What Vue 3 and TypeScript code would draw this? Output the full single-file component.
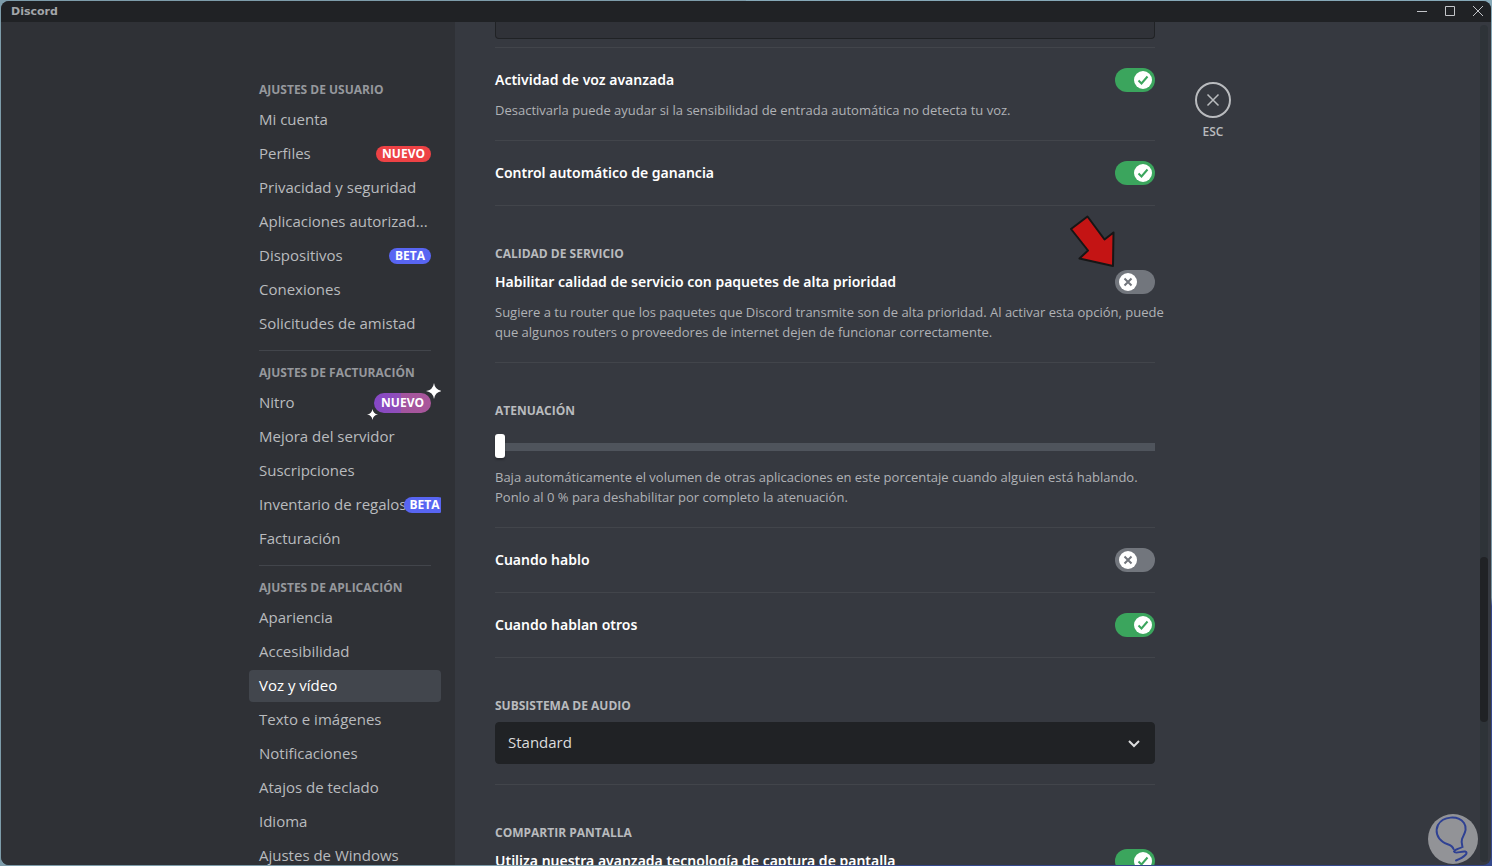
<script setup lang="ts">
import { reactive, ref } from 'vue'

interface NavItem {
  label: string
  badge?: string
  kind?: 'red' | 'blue' | 'nitro'
  active?: boolean
}
interface NavGroup {
  title: string
  items: NavItem[]
}

const groups: NavGroup[] = [
  {
    title: 'AJUSTES DE USUARIO',
    items: [
      { label: 'Mi cuenta' },
      { label: 'Perfiles', badge: 'NUEVO', kind: 'red' },
      { label: 'Privacidad y seguridad' },
      { label: 'Aplicaciones autorizad...' },
      { label: 'Dispositivos', badge: 'BETA', kind: 'blue' },
      { label: 'Conexiones' },
      { label: 'Solicitudes de amistad' },
    ],
  },
  {
    title: 'AJUSTES DE FACTURACIÓN',
    items: [
      { label: 'Nitro', badge: 'NUEVO', kind: 'nitro' },
      { label: 'Mejora del servidor' },
      { label: 'Suscripciones' },
      { label: 'Inventario de regalos', badge: 'BETA', kind: 'blue' },
      { label: 'Facturación' },
    ],
  },
  {
    title: 'AJUSTES DE APLICACIÓN',
    items: [
      { label: 'Apariencia' },
      { label: 'Accesibilidad' },
      { label: 'Voz y vídeo', active: true },
      { label: 'Texto e imágenes' },
      { label: 'Notificaciones' },
      { label: 'Atajos de teclado' },
      { label: 'Idioma' },
      { label: 'Ajustes de Windows' },
    ],
  },
]

interface Setting {
  id: string
  label: string
  on: boolean
  note?: string[]
  section?: string
  pointer?: boolean
}

const inputSettings = reactive<Setting[]>([
  {
    id: 'voice-activity',
    label: 'Actividad de voz avanzada',
    on: true,
    note: ['Desactivarla puede ayudar si la sensibilidad de entrada automática no detecta tu voz.'],
  },
  { id: 'gain', label: 'Control automático de ganancia', on: true },
  {
    id: 'qos',
    section: 'CALIDAD DE SERVICIO',
    label: 'Habilitar calidad de servicio con paquetes de alta prioridad',
    on: false,
    pointer: true,
    note: [
      'Sugiere a tu router que los paquetes que Discord transmite son de alta prioridad. Al activar esta opción, puede',
      'que algunos routers o proveedores de internet dejen de funcionar correctamente.',
    ],
  },
])

const duckSettings = reactive<Setting[]>([
  { id: 'duck-self', label: 'Cuando hablo', on: false },
  { id: 'duck-others', label: 'Cuando hablan otros', on: true },
])

const captureSettings = reactive<Setting[]>([
  {
    id: 'capture',
    section: 'COMPARTIR PANTALLA',
    label: 'Utiliza nuestra avanzada tecnología de captura de pantalla',
    on: true,
  },
])

const attenuation = ref(0)
const subsystem = ref('Standard')
</script>

<template>
  <div class="desktop">
    <div class="window">
      <header class="titlebar">
        <span class="brand">Discord</span>
        <div class="controls">
          <button type="button" aria-label="Minimizar">
            <svg width="28" height="21" viewBox="0 0 28 21"><path d="M10 10.5h10" /></svg>
          </button>
          <button type="button" aria-label="Maximizar">
            <svg width="28" height="21" viewBox="0 0 28 21"><path d="M10.5 5.500h9v9h-9z" /></svg>
          </button>
          <button type="button" aria-label="Cerrar ventana">
            <svg width="28" height="21" viewBox="0 0 28 21"><path d="M10 5l10 10M20 5l-10 10" /></svg>
          </button>
        </div>
      </header>

      <div class="body">
        <div class="side">
          <nav class="nav" aria-label="Ajustes">
            <section v-for="g in groups" :key="g.title" class="group">
              <h2 class="group-title">{{ g.title }}</h2>
              <a
                v-for="item in g.items"
                :key="item.label"
                href="#"
                class="item"
                :class="{ active: item.active }"
              >
                <span class="item-label">{{ item.label }}</span>
                <span v-if="item.badge" class="badge" :class="item.kind">
                  {{ item.badge }}
                  <template v-if="item.kind === 'nitro'">
                    <svg class="spark big" viewBox="0 0 16 16" aria-hidden="true">
                      <path d="M8 0Q9 7 16 8Q9 9 8 16Q7 9 0 8Q7 7 8 0Z" />
                    </svg>
                    <svg class="spark small" viewBox="0 0 16 16" aria-hidden="true">
                      <path d="M8 0Q9 7 16 8Q9 9 8 16Q7 9 0 8Q7 7 8 0Z" />
                    </svg>
                  </template>
                </span>
              </a>
            </section>
          </nav>
        </div>

        <div class="content">
          <main class="column">
            <div class="field-end"></div>

            <template
              v-for="(list, li) in [inputSettings, duckSettings, captureSettings]"
              :key="li"
            >
              <section v-if="li === 1" class="block sectioned">
                <label class="label" for="attenuation">ATENUACIÓN</label>
                <input
                  id="attenuation"
                  v-model.number="attenuation"
                  class="slider"
                  type="range"
                  min="0"
                  max="100"
                />
                <p class="note">
                  Baja automáticamente el volumen de otras aplicaciones en este porcentaje cuando alguien está hablando.<br />
                  Ponlo al 0 % para deshabilitar por completo la atenuación.
                </p>
              </section>
              <section v-if="li === 2" class="block sectioned">
                <label class="label" for="subsystem">SUBSISTEMA DE AUDIO</label>
                <div class="select-wrap">
                  <select id="subsystem" v-model="subsystem" class="select">
                    <option>Standard</option>
                    <option>Legacy</option>
                  </select>
                  <svg class="chevron" width="24" height="24" viewBox="0 0 24 24" aria-hidden="true">
                    <path d="M7 10l5 5 5-5" />
                  </svg>
                </div>
              </section>

              <section
                v-for="s in list"
                :key="s.id"
                class="block"
                :class="{ sectioned: s.section }"
              >
                <h3 v-if="s.section" class="label">{{ s.section }}</h3>
                <div class="row">
                  <label class="title" :for="s.id">{{ s.label }}</label>
                  <div class="toggle">
                    <input :id="s.id" v-model="s.on" type="checkbox" role="switch" />
                    <svg v-if="s.on" class="knob on" width="18" height="18" viewBox="0 0 18 18" aria-hidden="true">
                      <circle cx="9" cy="9" r="9" />
                      <path d="M4.500 9.500l3 3 6-7" />
                    </svg>
                    <svg v-else class="knob" width="18" height="18" viewBox="0 0 18 18" aria-hidden="true">
                      <circle cx="9" cy="9" r="9" />
                      <path d="M5.500 5.500l7 7M12.500 5.500l-7 7" />
                    </svg>
                    <svg v-if="s.pointer" class="pointer" width="50" height="56" viewBox="0 0 50 56" aria-hidden="true">
                      <path d="M20.500 3.500L4 16 21 37.500 12.500 45.500 46 53 46.500 19.500 37.500 26.500z" />
                    </svg>
                  </div>
                </div>
                <p v-if="s.note" class="note">
                  <template v-for="(line, i) in s.note" :key="i"><br v-if="i > 0" />{{ line }}</template>
                </p>
              </section>
            </template>
          </main>

          <div class="tools">
            <button type="button" class="close">
              <span class="ring">
                <svg width="18" height="18" viewBox="0 0 18 18" aria-hidden="true">
                  <path d="M3.500 3.500l11 11M14.500 3.500l-11 11" />
                </svg>
              </span>
              ESC
            </button>
          </div>
          <div class="scroll"><div class="thumb"></div></div>
        </div>
      </div>
    </div>

    <svg class="watermark" width="50" height="50" viewBox="0 0 50 50" aria-hidden="true">
      <circle cx="25" cy="25" r="25" />
      <path
        d="M25.500 35C24 30 19 31 15 28C9 24 7 17 10 11C15 2 30 1 36 9C40 15 36 20 34 25C33 28 34 31 34.500 33C31 35 27 35 26 37.500C27 40.500 33 37 37 37.500C41 38.500 37 43 28 46.500"
      />
    </svg>
  </div>
</template>

<style>
body {
  margin: 0;
}
</style>

<style scoped>
.desktop {
  position: relative;
  box-sizing: border-box;
  height: 100vh;
  padding: 1px;
  background: linear-gradient(to right, #7d9caa 0%, #7d9caa 50%, transparent 50%),
    linear-gradient(#86a9b8 0%, #7894a3 69%, #34488c 70%, #34488c 100%);
  font-family: 'Open Sans', 'Noto Sans', sans-serif;
  overflow: hidden;
}
.window {
  display: flex;
  flex-direction: column;
  height: 100%;
  border-radius: 8px;
  overflow: hidden;
  background: #363940;
}
.titlebar {
  flex: none;
  display: flex;
  justify-content: space-between;
  align-items: center;
  height: 21px;
  padding-left: 10px;
  background: #202225;
}
.brand {
  font: 700 11px/20px 'DejaVu Sans', sans-serif;
  color: #a3a6aa;
}
.controls {
  display: flex;
}
.controls button {
  display: flex;
  padding: 0;
  border: 0;
  background: none;
}
.controls path {
  fill: none;
  stroke: #c3c5c9;
  stroke-width: 1;
}
.body {
  flex: 1;
  min-height: 0;
  display: flex;
}
.side {
  flex: 1 0 218px;
  display: flex;
  justify-content: flex-end;
  background: #2f3136;
  overflow: hidden;
}
.nav {
  width: 192px;
  padding: 54px 14px 0 0;
}
.group + .group::before {
  content: '';
  display: block;
  height: 1px;
  margin: 10px 10px 8px;
  background: #42454b;
}
.group-title {
  margin: 0;
  padding: 6px 10px;
  font-size: 12px;
  line-height: 16px;
  font-weight: 700;
  color: #96989d;
  white-space: nowrap;
}
.item {
  display: flex;
  align-items: center;
  justify-content: space-between;
  height: 32px;
  margin-bottom: 2px;
  padding: 0 10px;
  border-radius: 4px;
  font-size: 15px;
  line-height: 20px;
  font-weight: 500;
  color: #b9bbbe;
  text-decoration: none;
  white-space: nowrap;
  overflow-x: clip;
}
.item-label {
  padding-bottom: 2px;
}
.item.active {
  background: #42464d;
  color: #fff;
}
.badge {
  position: relative;
  flex: none;
  margin-left: -3px;
  padding: 0 6px;
  border-radius: 8px;
  font-size: 12px;
  line-height: 16px;
  font-weight: 700;
  color: #fff;
}
.badge.red {
  background: #ed4245;
}
.badge.blue {
  background: #5865f2;
}
.badge.nitro {
  padding: 0 7px;
  border-radius: 10px;
  line-height: 20px;
  background: linear-gradient(to right, #8547c6, #914fb8 47%, #a3559f 47%, #a9569a);
}
.spark {
  position: absolute;
  fill: #fff;
}
.spark.big {
  width: 16px;
  height: 16px;
  top: -10px;
  right: -11px;
}
.spark.small {
  width: 11px;
  height: 11px;
  left: -7px;
  bottom: -7px;
}
.content {
  flex: 1 1 800px;
  display: flex;
  min-width: 0;
  overflow: hidden;
}
.column {
  flex: 0 1 660px;
  min-width: 0;
  padding: 0 40px;
}
.field-end {
  box-sizing: border-box;
  height: 17px;
  margin-bottom: 8px;
  border: 1px solid #202225;
  border-top: 0;
  border-radius: 0 0 4px 4px;
  background: #303238;
}
.block {
  padding-top: 20px;
  border-top: 1px solid #42454b;
  margin-bottom: 20px;
}
.sectioned {
  padding-top: 40px;
}
.label {
  display: block;
  margin: 0 0 8px;
  font-size: 12px;
  line-height: 16px;
  font-weight: 700;
  color: #b9bbbe;
}
.row {
  display: flex;
  justify-content: space-between;
  align-items: center;
  height: 24px;
}
.title {
  font-family: 'Noto Sans', sans-serif;
  font-size: 14px;
  line-height: 24px;
  font-weight: 600;
  color: #fff;
  white-space: nowrap;
}
.toggle {
  position: relative;
  flex: none;
  width: 40px;
  height: 24px;
}
.toggle input {
  appearance: none;
  display: block;
  width: 40px;
  height: 24px;
  margin: 0;
  border-radius: 12px;
  background: #72767d;
}
.toggle input:checked {
  background: #3ba55d;
}
.knob {
  position: absolute;
  top: 3px;
  left: 4px;
  pointer-events: none;
  stroke: #72767d;
}
.knob.on {
  left: 19px;
  stroke: #3ba55d;
}
.knob circle {
  fill: #fff;
  stroke: none;
}
.knob path {
  fill: none;
  stroke-width: 2;
}
.pointer {
  position: absolute;
  top: -57px;
  left: -48px;
  pointer-events: none;
}
.pointer path {
  fill: #c41414;
  stroke: #161616;
  stroke-width: 2;
  stroke-linejoin: round;
}
.note {
  margin: 8px 0 0;
  font-size: 13px;
  line-height: 20px;
  color: #b0b2b6;
  white-space: nowrap;
}
.slider {
  appearance: none;
  display: block;
  width: 100%;
  height: 24px;
  margin: 15px 0 9px;
  background: linear-gradient(#4f545c, #4f545c) 0 9px / 100% 8px no-repeat;
  border-radius: 4px;
}
.slider::-webkit-slider-thumb {
  appearance: none;
  width: 10px;
  height: 24px;
  border-radius: 3px;
  background: #fff;
  box-shadow: 0 2px 2px rgba(0, 0, 0, 0.25);
}
.select-wrap {
  position: relative;
}
.select {
  appearance: none;
  display: block;
  width: 100%;
  height: 42px;
  padding: 0 12px 2px;
  border: 1px solid #202225;
  border-radius: 4px;
  background: #202225;
  font-family: inherit;
  font-size: 15px;
  font-weight: 500;
  color: #dcddde;
}
.chevron {
  position: absolute;
  top: 9px;
  right: 9px;
  pointer-events: none;
  fill: none;
  stroke: #dcddde;
  stroke-width: 2;
}
.tools {
  flex: none;
  padding-top: 60px;
}
.close {
  display: flex;
  flex-direction: column;
  align-items: center;
  gap: 6px;
  width: 36px;
  padding: 0;
  border: 0;
  background: none;
  font-family: inherit;
  font-size: 12px;
  line-height: 16px;
  font-weight: 600;
  color: #b9bbbe;
}
.ring {
  box-sizing: border-box;
  display: flex;
  align-items: center;
  justify-content: center;
  width: 36px;
  height: 36px;
  border: 2px solid #b9bbbe;
  border-radius: 50%;
}
.ring path {
  fill: none;
  stroke: #b9bbbe;
  stroke-width: 1.500;
}
.scroll {
  display: flex;
  flex-direction: column;
  width: 8px;
  margin: 3px 3px 3px auto;
  border-radius: 4px;
  background: #2e3338;
}
.thumb {
  height: 165px;
  margin-top: 532px;
  border-radius: 4px;
  background: #202225;
}
.watermark {
  position: absolute;
  right: 14px;
  bottom: 2px;
}
.watermark circle {
  fill: #929397;
}
.watermark path {
  fill: none;
  stroke: #2f4193;
  stroke-width: 2;
  stroke-linecap: round;
}
</style>
